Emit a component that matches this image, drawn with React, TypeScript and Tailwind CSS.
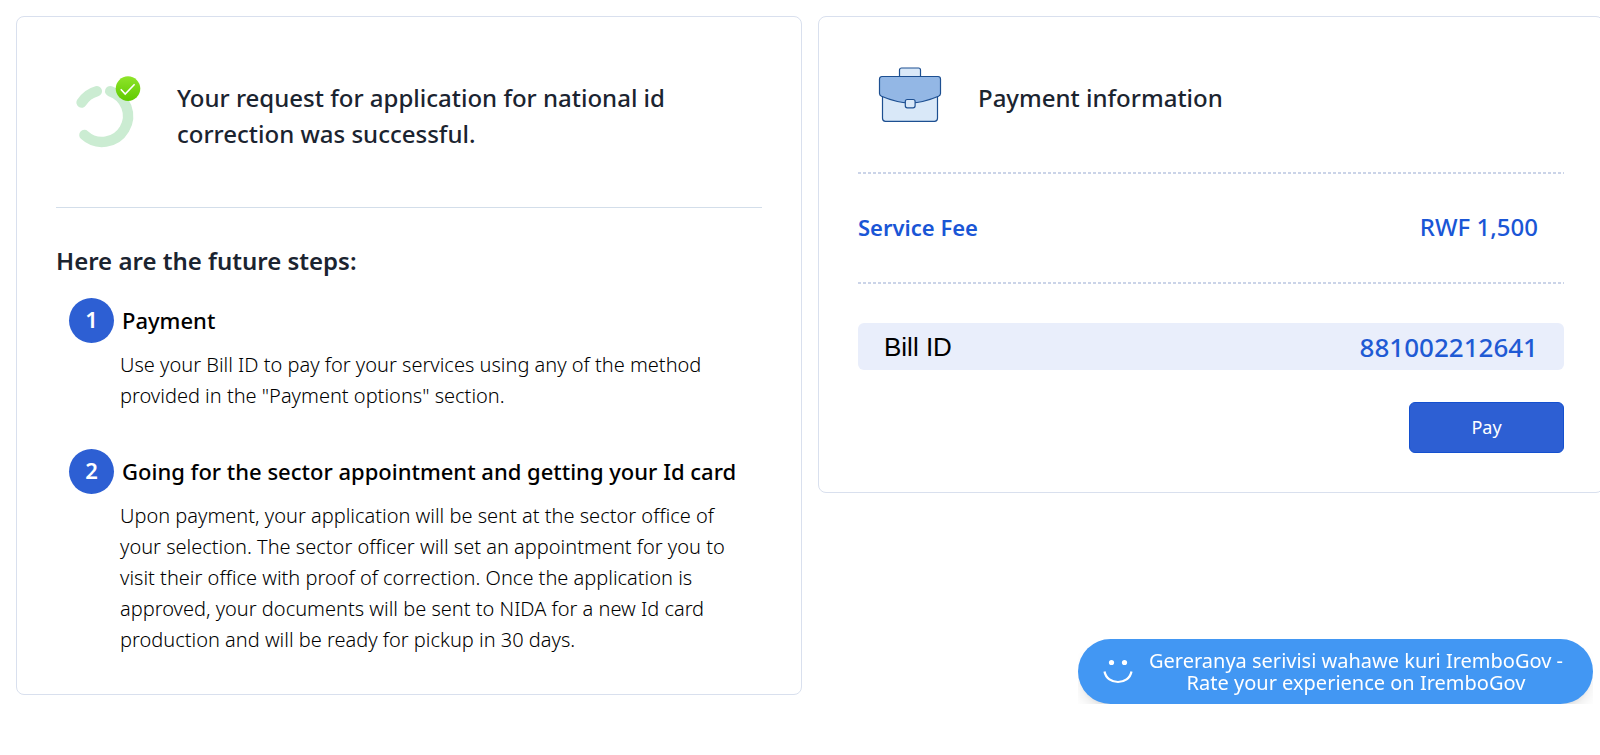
interface Step {
  title: string;
  description: string;
}

const steps: Step[] = [
  {
    title: "Payment",
    description:
      'Use your Bill ID to pay for your services using any of the method provided in the "Payment options" section.',
  },
  {
    title: "Going for the sector appointment and getting your Id card",
    description:
      "Upon payment, your application will be sent at the sector office of your selection. The sector officer will set an appointment for you to visit their office with proof of correction. Once the application is approved, your documents will be sent to NIDA for a new Id card production and will be ready for pickup in 30 days.",
  },
];

function SuccessIcon() {
  return (
    <svg width="66" height="80" viewBox="0 0 66 80" fill="none" className="shrink-0" aria-hidden="true">
      <defs>
        <linearGradient id="badge" x1="0" y1="0" x2="0" y2="1">
          <stop offset="0" stopColor="#8fe42a" />
          <stop offset="1" stopColor="#5fca00" />
        </linearGradient>
      </defs>
      <g stroke="#cbecd2" strokeWidth="10.4" strokeLinecap="round">
        <path d="M34.2 15.2A26 26 0 1 1 8.4 59" />
        <path d="M5.6 26.6A26 26 0 0 1 20.8 15.2" />
      </g>
      <circle cx="52" cy="12.6" r="12.3" fill="url(#badge)" />
      <path d="M44.8 13.2l4.4 4.8 9.4-9.8" stroke="#fff" strokeWidth="1.6" />
    </svg>
  );
}

function BriefcaseIcon() {
  return (
    <svg
      width="64"
      height="66"
      viewBox="0 0 64 66"
      className="shrink-0"
      stroke="#1d4f91"
      strokeWidth="1.2"
      aria-hidden="true"
    >
      <path d="M21.5 12V5a2 2 0 0 1 2-2h17a2 2 0 0 1 2 2v7z" fill="#d9e8f8" />
      <path d="M4.5 26h55v27.3a3 3 0 0 1-3 3h-49a3 3 0 0 1-3-3z" fill="#d9e8f8" />
      <path
        d="M4 11.5h56a2.5 2.5 0 0 1 2.5 2.5v14.5q0 1.8-2 2.8Q46 37.5 32 38.2 18 37.5 3.5 31.3q-2-1-2-2.8V14A2.5 2.5 0 0 1 4 11.5z"
        fill="#93b7e5"
      />
      <rect x="27.3" y="34.5" width="9.8" height="8.3" rx="2" fill="#d9e8f8" />
    </svg>
  );
}

function SmileIcon() {
  return (
    <svg width="30" height="26" viewBox="0 0 30 26" fill="none" className="shrink-0" aria-hidden="true">
      <circle cx="8.5" cy="3.5" r="2.6" fill="#fff" />
      <circle cx="21.5" cy="3.5" r="2.6" fill="#fff" />
      <path d="M1.5 12.5C4 26.5 26 26.5 28.5 12.5" stroke="#fff" strokeWidth="2.2" />
    </svg>
  );
}

function DashedLine() {
  return (
    <div className="h-[2px] bg-[repeating-linear-gradient(90deg,#cbd4e8_0_3px,transparent_3px_5px)]" />
  );
}

export default function App() {
  return (
    <div className="min-h-screen overflow-x-hidden bg-white font-['Noto_Sans',sans-serif]">
      <main className="-mr-1 grid grid-cols-2 items-start gap-4 pt-4 pl-4">
        {/* request status */}
        <section className="rounded-lg border border-[#d9e0ee] px-[39px] pb-[39px]">
          <div className="flex items-center gap-[35px] pt-[59px] pb-[51px] pl-5">
            <SuccessIcon />
            <h1 className="text-2xl leading-9 font-medium text-[#1b2430]">
              Your request for application for national id correction was
              successful.
            </h1>
          </div>

          <hr className="border-[#d3deea]" />

          <h2 className="mt-[35px] text-2xl leading-9 font-semibold text-[#1b2430]">
            Here are the future steps:
          </h2>

          <ol className="mt-[19px] flex flex-col gap-[38px]">
            {steps.map((step, index) => (
              <li key={step.title}>
                <div className="flex items-center gap-2 pl-[13px]">
                  <span className="flex size-[45px] shrink-0 items-center justify-center rounded-full bg-[#2d5fd3] pb-[2px] text-[22px] font-semibold text-white">
                    {index + 1}
                  </span>
                  <h3 className="pb-[2px] text-[22px] leading-8 font-medium text-black">
                    {step.title}
                  </h3>
                </div>
                <p className="mt-[6px] pr-6 pl-16 text-xl leading-[31px] font-light text-black">
                  {step.description}
                </p>
              </li>
            ))}
          </ol>
        </section>

        {/* payment */}
        <section className="rounded-lg border border-[#d9e0ee] px-[39px] pb-[39px]">
          <div className="flex items-center gap-9 pt-12 pb-[41px] pl-5">
            <BriefcaseIcon />
            <h2 className="text-2xl leading-9 font-medium text-[#1b2430]">
              Payment information
            </h2>
          </div>

          <DashedLine />
          <div className="flex items-baseline justify-between pt-[35px] pr-[26px] pb-[37px] leading-9 text-[#1a56d6]">
            <span className="text-[22px] font-semibold">Service Fee</span>
            <span className="text-2xl leading-9 font-medium">RWF 1,500</span>
          </div>
          <DashedLine />

          <div className="mt-[39px] flex h-[47px] items-center justify-between rounded-md bg-[#e9eefb] px-[26px] pt-[2px] text-[26px]">
            <span className="font-['Liberation_Sans',sans-serif] text-black">
              Bill ID
            </span>
            <span className="font-medium text-[#1f5ad4]">881002212641</span>
          </div>

          <div className="mt-8 flex justify-end">
            <button
              type="button"
              className="h-[51px] w-[155px] rounded-md border border-[#1450cf] bg-[#2d5fd3] pb-[2px] text-lg text-white"
            >
              Pay
            </button>
          </div>
        </section>
      </main>

      {/* feedback */}
      <div className="fixed right-[7px] bottom-[51px] overflow-hidden">
        <button
          type="button"
          className="flex h-[65px] w-[515px] items-center gap-[13px] rounded-full bg-[#4297f3] pl-[25px] text-xl leading-[22px] text-white shadow-lg"
        >
          <SmileIcon />
          <span className="w-[420px] text-center">
            Gereranya serivisi wahawe kuri IremboGov - Rate your experience on
            IremboGov
          </span>
        </button>
      </div>
    </div>
  );
}
